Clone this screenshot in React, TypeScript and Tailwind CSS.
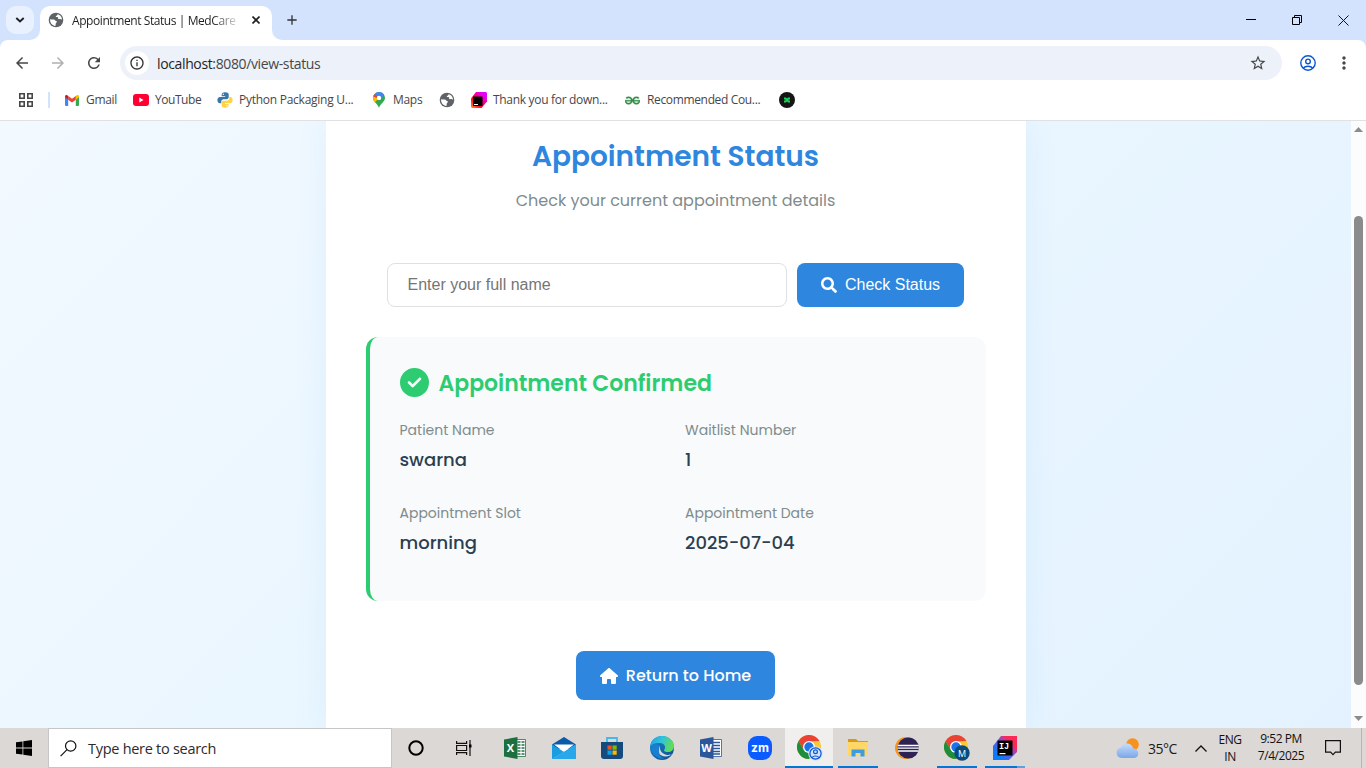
import type { ReactNode } from "react";
import {
  MdArrowBack, MdArrowForward, MdRefresh, MdStarBorder, MdMoreVert,
  MdInfoOutline, MdAdd,
} from "react-icons/md";
import { FaSearch } from "react-icons/fa";
import { FaCircleCheck, FaHouse } from "react-icons/fa6";
import { SiGeeksforgeeks } from "react-icons/si";

const SEGOE = "font-['Segoe_UI','Open_Sans',sans-serif]";
const POPPINS = "font-['Poppins','Inter',sans-serif]";

function Globe() {
  return (
    <svg viewBox="0 0 16 16" className="size-4 shrink-0">
      <circle cx="8" cy="8" r="7.3" fill="#5f6368" />
      <path d="M2 7.200c1.400 .2 2.600.2 3.900.4 1 .2 1.200 1.300 2.200 1.400.9.1 1 1 .4 1.600-.7.6-.9 1.300-.9 2.900 0 .5-.3.5-.7.4C3.800 13.200 1.900 10.800 2 7.200z" fill="#fff" />
      <path d="M9.300 2.200c.5.800-.3 1.400-1.100 1.600-.8.200-.4 1.400.6 1.300 1 0 1.300.5 1.300 1.400 0 .8 1 .9 1.700.6.8-.3 1.400.4 2.100.7.300-2.700-1.600-5.100-4.600-5.600z" fill="#fff" />
    </svg>
  );
}

function ChromeLogo() {
  return (
    <>
      <circle cx="12" cy="12" r="12" fill="#fcc934" />
      <path d="M1.600 6A12 12 0 0 1 22.400 6L12 6.500 6.800 15z" fill="#ea4335" />
      <path d="M1.600 6A12 12 0 0 0 12 24L17.200 15 12 17.500 6.800 15z" fill="#1e8e3e" />
      <circle cx="12" cy="12" r="6" fill="#fff" />
      <circle cx="12" cy="12" r="4.700" fill="#1a73e8" />
    </>
  );
}

function Bookmark({ icon, label, className }: { icon: ReactNode; label: string; className: string }) {
  return (
    <div className={`flex shrink-0 items-center ${className}`}>
      {icon}
      <span className="whitespace-nowrap text-[12px] text-[#474747]">{label}</span>
    </div>
  );
}

function BrowserChrome() {
  return (
    <header className={`shrink-0 bg-[#d3e3fd] ${SEGOE}`}>
      <div className="flex h-10 items-center">
        <div className="ml-1.5 flex size-7 items-center justify-center rounded-[10px] bg-[#e9f1fe]">
          <svg viewBox="0 0 10 6" className="h-[6px] w-[10px]" fill="none" stroke="#1f1f1f" strokeWidth="1.900"><path d="M1.300 1L5 4.500 8.700 1" /></svg>
        </div>
        <svg viewBox="0 0 10 10" className="-ml-1 size-[10px] self-end"><path d="M0 10A10 10 0 0 0 10 0V10z" fill="#fff" /></svg>
        <div className="flex h-[34px] w-[232px] items-center self-end rounded-t-[10px] bg-white pl-2 pb-1.5">
          <Globe />
          <div className="ml-2 w-[164px] overflow-hidden whitespace-nowrap pt-[2px] text-[12px] tracking-[-0.42px] text-[#1f1f1f] [mask-image:linear-gradient(to_right,black_140px,transparent_170px)]">
            Appointment Status | MedCare
          </div>
          <svg viewBox="0 0 8 8" className="ml-[16px] size-2" fill="none" stroke="#1f1f1f" strokeWidth="1.600"><path d="M.5.5l7 7M7.500.5l-7 7" /></svg>
        </div>
        <svg viewBox="0 0 10 10" className="size-[10px] self-end"><path d="M0 0A10 10 0 0 0 10 10H0z" fill="#fff" /></svg>
        <MdAdd className="ml-[2px] size-4 text-[#333]" />
        <div className="ml-auto flex items-center gap-9 pr-[17px]">
          <svg viewBox="0 0 10 10" className="size-[10px]"><path d="M0 4.500H10" stroke="#000" /></svg>
          <svg viewBox="0 0 10 10" className="size-[10px]" fill="none" stroke="#000"><path d="M.5 2.500h7v7h-7zM2.500 2.500V.5h7v7h-2" /></svg>
          <svg viewBox="0 0 11 11" className="size-[11px]" fill="none" stroke="#111"><path d="M.5.5l10 10M10.500.5l-10 10" /></svg>
        </div>
      </div>
      <div className="flex h-10 items-center rounded-t-lg bg-white pt-[6px]">
        <MdArrowBack className="ml-[13px] size-[18px] text-[#474747]" />
        <MdArrowForward className="ml-[18px] size-[18px] text-[#b0b0b0]" />
        <MdRefresh className="ml-[18px] size-[18px] text-[#474747]" />
        <div className="ml-[17px] flex h-[34px] w-[1162px] items-center rounded-full bg-[#ecf1fa] pl-[5px] pr-[15px]">
          <div className="flex size-6 items-center justify-center rounded-full bg-white">
            <MdInfoOutline className="size-4 text-[#333]" />
          </div>
          <span className="ml-2 whitespace-nowrap text-[14px] tracking-[-0.37px] text-[#1f1f1f]">
            localhost<span className="text-[#474747]">:8080/view-status</span>
          </span>
          <MdStarBorder className="ml-auto size-[18px] text-[#474747]" />
        </div>
        <svg viewBox="0 0 16 16" className="ml-[18px] size-4" fill="none" stroke="#0b57d0" strokeWidth="1.400">
          <circle cx="8" cy="8" r="7.200" /><circle cx="8" cy="6.400" r="2.300" /><path d="M3.200 13.200c2.200-2.600 7.400-2.600 9.600 0" />
        </svg>
        <MdMoreVert className="ml-[18px] size-[20px] text-[#474747]" />
      </div>
      <div className="flex h-[41px] items-center border-b border-[#dfe1e2] bg-white">
        <svg viewBox="0 0 14 14" className="ml-[19px] size-[14px]" fill="none" stroke="#474747" strokeWidth="1.600"><path d="M.8.8h4.400v4.400H.8zM8.800.8h4.400v4.400H8.800zM.8 8.800h4.400v4.400H.8zM8.800 8.800h4.400v4.400H8.800z" /></svg>
        <div className="ml-[15px] h-4 w-[2px] bg-[#d3e3fd]" />
        <Bookmark className="ml-[15px] w-[68px] gap-[7px] tracking-[-0.3px]" label="Gmail" icon={
          <svg viewBox="0 0 14 11" className="h-[11px] w-[14px] shrink-0">
            <path d="M0 1.500V10a1 1 0 0 0 1 1h2.200V4.500z" fill="#4285f4" /><path d="M10.800 4.500V11H13a1 1 0 0 0 1-1V1.500z" fill="#34a853" />
            <path d="M10.800 1v3.700L14 2.300V1.400C14 0 12.500-.4 11.500.4z" fill="#fbbc04" /><path d="M3.200 4.700V1L7 3.800 10.800 1v3.700L7 7.500z" fill="#ea4335" /><path d="M0 1.400v.9l3.200 2.400V1L2.500.4C1.500-.4 0 0 0 1.400z" fill="#c5221f" />
          </svg>} />
        <Bookmark className="w-[84px] gap-[6px] tracking-[-0.45px]" label="YouTube" icon={
          <svg viewBox="0 0 16 12" className="h-[12px] w-[16px] shrink-0"><rect width="16" height="12" rx="3" fill="#ff0033" /><path d="M6.300 3.500v5L10.500 6z" fill="#fff" /></svg>} />
        <Bookmark className="w-[156px] gap-[6px] tracking-[-0.26px]" label="Python Packaging U..." icon={
          <svg viewBox="0 0 16 16" className="size-4 shrink-0">
            <path d="M8 .3C5.300.3 4.700 1.400 4.700 2.500v1.700h3.500v.7H3C1.300 4.900.4 6.200.4 8.100c0 2 .9 3.200 2.500 3.200h1.400V9.400c0-1.200 1-2.200 2.300-2.200h3.200c1 0 1.900-.8 1.900-1.900V2.500C11.700 1.200 10.500.3 8 .3z" fill="#3776ab" />
            <path d="M8.200 15.800c2.600 0 3.300-1 3.300-2.200v-1.700H8v-.6h5.100c1.700 0 2.500-1.400 2.500-3.300s-.9-3.100-2.400-3.100h-1v1.700c0 1.300-1.100 2.200-2.300 2.200H6.600c-1.100 0-1.900.9-1.900 1.900v2.900c0 1.300 1.100 2.200 3.500 2.200z" fill="#ffd343" />
            <circle cx="6.300" cy="2.300" r=".7" fill="#fff" /><circle cx="9.900" cy="13.800" r=".7" fill="#fff" />
          </svg>} />
        <Bookmark className="w-[66px] gap-[8px] tracking-[-0.3px]" label="Maps" icon={
          <svg viewBox="0 0 12 16" className="h-4 w-[12px] shrink-0">
            <path d="M6 0a6 6 0 0 0-6 6c0 4 4.500 5 6 10 1.500-5 6-6 6-10a6 6 0 0 0-6-6z" fill="#34a853" />
            <path d="M.3 4.200A6 6 0 0 1 1.600 2L6 6 1.700 10.400C.4 8.900-.4 6.500.3 4.200z" fill="#fbbc04" /><path d="M1.400 2.200A6 6 0 0 0 .2 4.600L3.700 6 6 3.500z" fill="#ea4335" /><path d="M1.400 2.200A6 6 0 0 1 11.200 3L7 7z" fill="#4285f4" /><circle cx="6" cy="5.900" r="2.200" fill="#fff" />
          </svg>} />
        <div className="w-[32px]"><Globe /></div>
        <Bookmark className="w-[154px] gap-[6px] tracking-[-0.31px]" label="Thank you for down..." icon={
          <svg viewBox="0 0 16 16" className="size-4 shrink-0">
            <defs><linearGradient id="jb" x1="0" y1="1" x2="1" y2="0"><stop offset="0" stopColor="#ff9419" /><stop offset=".35" stopColor="#ff021d" /><stop offset=".8" stopColor="#e600ff" /></linearGradient></defs>
            <path d="M0 6.500L5 0H15l1 1v8.500L10.500 16H1L0 15z" fill="url(#jb)" /><path d="M2 4.500h9.500V14H2z" fill="#000" /><path d="M3 12h4v1H3z" fill="#fff" />
          </svg>} />
        <Bookmark className="w-[154px] gap-[7px] tracking-[-0.35px]" label="Recommended Cou..." icon={<SiGeeksforgeeks className="size-[15px] shrink-0 stroke-[#2f8d46] stroke-[0.600px] text-[#2f8d46]" />} />
        <svg viewBox="0 0 16 16" className="size-4">
          <circle cx="8" cy="8" r="8" fill="#151515" />
          <path d="M5 5.500h2l1 1 1-1h2v2H9.500v1H11v2H9l-1-1-1 1H5v-2h1.500v-1H5z" fill="#19d35b" />
        </svg>
      </div>
    </header>
  );
}

function Detail({ label, value }: { label: string; value: string }) {
  return (
    <div className="flex h-[59px] flex-col whitespace-nowrap">
      <span className="text-[14px] leading-[24px] text-[#7f8c8d]">{label}</span>
      <span className="mt-[3px] text-[18px] font-medium leading-[30px] text-[#2c3e50]">{value}</span>
    </div>
  );
}

function Page() {
  return (
    <main className="flex min-h-0 flex-1 overflow-hidden">
      <div className={`flex flex-1 justify-center overflow-hidden bg-[linear-gradient(135deg,#f2f9ff_0%,#e9f6ff_50%,#e4f2ff_100%)] ${POPPINS}`}>
        <section className="flex w-[700px] flex-col items-center bg-white px-10 shadow-[0_0_30px_rgba(46,134,222,0.08)]">
          <h1 className="mt-[14px] text-[28px] font-semibold leading-[44px] text-[#2e86de]">Appointment Status</h1>
          <p className="mt-[9px] text-[16px] leading-[26px] text-[#7f8c8d]">Check your current appointment details</p>
          <div className="mt-[49px] flex w-full gap-[10px] pl-[21px] font-['Liberation_Sans',sans-serif]">
            <input placeholder="Enter your full name" className="h-11 w-[400px] rounded-lg border border-[#e0e0e0] px-5 text-[16px] text-[#2c3e50] outline-none placeholder:text-[#757575]" />
            <button className="flex h-11 w-[167px] items-center justify-center gap-2 rounded-lg bg-[#2e86de] pl-[1px] text-[16px] text-white">
              <FaSearch className="size-4" /><span>Check Status</span>
            </button>
          </div>
          <div className="mt-[30px] h-[264px] w-full rounded-xl border-l-4 border-[#2ecc71] bg-[#f8fafc] px-[30px] pt-[27px]">
            <h2 className="flex h-9 items-center gap-[10px] text-[22px] font-semibold leading-9 text-[#2ecc71]">
              <FaCircleCheck className="size-[29px]" /><span className="pt-[3px]">Appointment Confirmed</span>
            </h2>
            <div className="mt-[18px] grid grid-cols-2 gap-x-[15px] gap-y-[24px]">
              <Detail label="Patient Name" value="swarna" />
              <Detail label="Waitlist Number" value="1" />
              <Detail label="Appointment Slot" value="morning" />
              <Detail label="Appointment Date" value="2025-07-04" />
            </div>
          </div>
          <button className="mt-[50px] flex h-[49px] w-[199px] shrink-0 items-center justify-center gap-2 rounded-lg bg-[#2e86de] text-[16px] font-medium text-white">
            <FaHouse className="size-[18px]" /><span>Return to Home</span>
          </button>
        </section>
      </div>
      <div className="flex w-[15px] flex-col items-center bg-[#fcfcfc]">
        <svg viewBox="0 0 9 5" className="mt-[6px] h-[5px] w-[9px]"><path d="M0 5L4.500 0 9 5z" fill="#8b8b8b" /></svg>
        <div className="mt-[84px] h-[469px] w-[9px] rounded-full bg-[#8b8b8b]" />
        <svg viewBox="0 0 9 5" className="mt-[31px] h-[5px] w-[9px]"><path d="M0 0L4.500 5 9 0z" fill="#8b8b8b" /></svg>
      </div>
    </main>
  );
}

function TaskButton({ children, active, bar, className = "" }: { children: ReactNode; active?: boolean; bar?: ReactNode; className?: string }) {
  return (
    <div className="flex w-[49.100px] justify-center">
      <div className={`relative flex h-10 w-12 items-center justify-center ${active ? "bg-[#f1efed]" : ""} ${className}`}>
        {children}
        {bar}
      </div>
    </div>
  );
}

function Office({ color, dark, letter, kind }: { color: string; dark: string; letter: string; kind: "grid" | "lines" }) {
  return (
    <svg viewBox="0 0 24 24" className="size-6">
      <path d="M13 3.500h9.500v17H13z" fill="#fff" stroke={color} strokeWidth=".8" />
      {kind === "grid"
        ? <path d="M14.500 6h3M18.500 6h3M14.500 9h3M18.500 9h3M14.500 12h3M18.500 12h3M14.500 15h3M18.500 15h3M14.500 18h3M18.500 18h3" stroke={color} strokeWidth="1.600" />
        : <path d="M14 6.500h7M14 9.500h7M14 12.500h7M14 15.500h7M14 18h7" stroke={color} strokeWidth="1.300" />}
      <path d="M1 3.500L14.500 1v22L1 20.500z" fill={dark} />
      <text x="7.500" y="16.300" textAnchor="middle" fontSize="11" fontWeight="700" fill="#fff" fontFamily="Open Sans, sans-serif">{letter}</text>
    </svg>
  );
}

function Taskbar() {
  const bar = <div className="absolute bottom-0 h-[2px] w-10 bg-[#0078d7]" />;
  return (
    <footer className={`flex h-10 shrink-0 items-center bg-[#dcd8d5] ${SEGOE}`}>
      <svg viewBox="0 0 16 16" className="mx-4 size-4 shrink-0" fill="#000"><path d="M0 2.300L6.500 1.400v6.200H0zM7.300 1.300L16 0v7.600H7.300zM0 8.400h6.500v6.200L0 13.700zM7.300 8.400H16V16l-8.700-1.300z" /></svg>
      <div className="flex h-10 w-[344px] shrink-0 items-center border border-[#c6c6c6] bg-white pl-[11px]">
        <svg viewBox="0 0 17 17" className="size-[17px]" fill="none" stroke="#111" strokeWidth="1.200"><circle cx="10.700" cy="6" r="5.200" /><path d="M7 9.700L.6 16.200" /></svg>
        <span className="ml-[11px] pt-[2px] text-[14.500px] tracking-[-0.28px] text-[#2b2b2b]">Type here to search</span>
      </div>
      <div className="flex">
        <TaskButton className="pr-[2px]"><svg viewBox="0 0 16 16" className="size-4"><circle cx="8" cy="8" r="6.700" fill="none" stroke="#000" strokeWidth="2" /></svg></TaskButton>
        <TaskButton className="pr-[3px]"><svg viewBox="0 0 16 16" className="size-4" fill="none" stroke="#111" strokeWidth="1.200"><path d="M.6 1v2.400h10V1M.6 15v-2.400h10V15M.6 5.500h10v5H.6zM14 0v16" /><path d="M13 4.500h2.500v3H13z" fill="#000" stroke="none" /></svg></TaskButton>
        <TaskButton><Office color="#217346" dark="#1d6f42" letter="X" kind="grid" /></TaskButton>
        <TaskButton><svg viewBox="0 0 24 24" className="size-6"><path d="M0 8.500L12 1l12 7.500L20 13H4z" fill="#0a5ba8" /><path d="M2 8.500h20L12 16z" fill="#fff" /><path d="M0 8.500l12 7.500L0 23z" fill="#1b9de2" /><path d="M24 8.500V23H0z" fill="#35b8f1" /><path d="M24 8.500L12 16 0 23h24z" fill="#28a8ea" /></svg></TaskButton>
        <TaskButton className="pr-[1px]"><svg viewBox="0 0 24 24" className="size-6"><path d="M7 7V2h10v5" fill="none" stroke="#45b8ee" strokeWidth="1.800" /><path d="M1 6h22v14a3 3 0 0 1-3 3H4a3 3 0 0 1-3-3z" fill="#174a7c" /><path d="M7.500 9.500h4.200v4.200H7.500z" fill="#f25022" /><path d="M12.500 9.500h4.200v4.200h-4.200z" fill="#7fba00" /><path d="M7.500 14.500h4.200v4.200H7.500z" fill="#00a4ef" /><path d="M12.500 14.500h4.200v4.200h-4.200z" fill="#ffb900" /></svg></TaskButton>
        <TaskButton><svg viewBox="0 0 24 24" className="size-6">
          <defs><linearGradient id="e1" x1="0" y1="0" x2="1" y2=".3"><stop offset="0" stopColor="#1e9fe0" /><stop offset=".5" stopColor="#2fc2df" /><stop offset="1" stopColor="#5fdc5a" /></linearGradient><linearGradient id="e2" x1="0" y1="0" x2="1" y2="1"><stop offset="0" stopColor="#1a8ad6" /><stop offset="1" stopColor="#114a8b" /></linearGradient></defs>
          <circle cx="12" cy="12" r="12" fill="url(#e2)" /><path d="M0 11C.5 4.500 5.500 0 12 0c7 0 12 5 12 10 0 4-3 6-6 6-2.600 0-4-.8-4-1.800s1-1 1-3C15 8.500 12.500 7 9 7 4.500 7 1 8.500 0 11z" fill="url(#e1)" />
          <path d="M10 10c-2 1.500-2.500 4-1.500 6.500C10 20 15 21.500 20 19.500c1-.4 1.800-.9 2.400-1.500-1 .5-3 1-4.800.9-4.600-.2-8.500-4-7.600-8.900z" fill="#dcd8d5" /><path d="M9.500 11C9 7.800 5 7.500 2 9.500c-1.500 3 0 8 3.500 10.500 2.500 2 5.500 3 8.500 2.500-4-1.500-6-6-4.500-11.500z" fill="#1b7fd0" />
        </svg></TaskButton>
        <TaskButton><Office color="#2b579a" dark="#2b579a" letter="W" kind="lines" /></TaskButton>
        <TaskButton><svg viewBox="0 0 24 24" className="size-6"><rect width="24" height="24" rx="9" fill="#0b5cff" /><text x="12" y="15.500" textAnchor="middle" fontSize="12" fontWeight="700" fill="#fff" fontFamily="Inter, sans-serif">zm</text></svg></TaskButton>
        <TaskButton active bar={<div className="absolute bottom-0 left-0 h-[2px] w-12 bg-[#0078d7]" />} className="pl-[2px]"><svg viewBox="0 0 26 26" className="size-[26px]"><ChromeLogo /><circle cx="18.500" cy="18.500" r="7.300" fill="#d3e3fd" /><circle cx="18.500" cy="18.500" r="5.600" fill="none" stroke="#0b57d0" strokeWidth="1.200" /><circle cx="18.500" cy="16.800" r="1.900" fill="none" stroke="#0b57d0" strokeWidth="1.200" /><path d="M15 22.500c1.500-2 5.500-2 7 0" fill="none" stroke="#0b57d0" strokeWidth="1.200" /></svg></TaskButton>
        <TaskButton bar={bar}><svg viewBox="0 0 22 20" className="h-5 w-[22px]"><path d="M1 1h8l2 2h10v6H1z" fill="#d99a10" /><path d="M1 4h20v14H1z" fill="#ffd767" /><path d="M4.500 18.500v-7h13v7h-4V15h-5v3.500z" fill="#3d9be0" /></svg></TaskButton>
        <TaskButton><svg viewBox="0 0 24 24" className="size-6"><circle cx="11" cy="12" r="11" fill="#f7941e" /><circle cx="13.300" cy="12" r="10.600" fill="#2c2255" /><path d="M2.900 9.500h20.800M2.700 12.200h21.200M3 15h20.600" stroke="#fff" strokeWidth="1.300" /></svg></TaskButton>
        <TaskButton bar={bar}><svg viewBox="0 0 26 26" className="size-[26px]"><ChromeLogo /><circle cx="18" cy="18" r="7.700" fill="#0a4a7c" /><text x="18" y="21.500" textAnchor="middle" fontSize="9" fill="#fff" fontFamily="Open Sans, sans-serif">M</text></svg></TaskButton>
        <TaskButton className="pr-[2px]" bar={<div className="absolute bottom-0 left-[3px] flex h-[2px] w-10 bg-[#0078d7]"><div className="ml-auto w-2 bg-[#5ba3e0]" /></div>}><svg viewBox="0 0 24 24" className="size-6"><defs><linearGradient id="ij" x1="0" y1="1" x2="1" y2="0"><stop offset=".2" stopColor="#087cfa" /><stop offset=".55" stopColor="#7b4fe0" /><stop offset=".75" stopColor="#fe2857" /></linearGradient></defs><path d="M0 10L8 0h16v16l-8 8H0z" fill="url(#ij)" /><path d="M4.500 4.500h15v15h-15z" fill="#000" /><path d="M6.500 17h6v1.200h-6z" fill="#fff" /><text x="6" y="13" fontSize="8.500" fontWeight="700" fill="#fff" fontFamily="Liberation Mono, monospace">IJ</text></svg></TaskButton>
      </div>
      <svg viewBox="0 0 24 20" className="ml-auto h-5 w-6"><defs><linearGradient id="cl" x1="0" y1="0" x2="0" y2="1"><stop offset="0" stopColor="#c7dcf8" /><stop offset="1" stopColor="#78a7ea" /></linearGradient></defs><circle cx="16.500" cy="6.500" r="6.300" fill="#f7921e" /><path d="M5.500 20a5.300 5.300 0 0 1-.5-10.500 6.500 6.500 0 0 1 12.300 1A4.900 4.900 0 0 1 19 20z" fill="url(#cl)" /></svg>
      <span className="ml-2 text-[14px] tracking-[-0.45px] text-[#1a1a1a]">35°C</span>
      <svg viewBox="0 0 12 7" className="ml-[18px] h-[7px] w-3" fill="none" stroke="#111" strokeWidth="1.300"><path d="M.5 6.500L6 1l5.500 5.500" /></svg>
      <div className="ml-[8px] flex w-[30px] flex-col items-center text-[12px] leading-[17px] tracking-[-0.4px] text-[#111]"><span>ENG</span><span>IN</span></div>
      <div className="ml-[8px] flex w-[56px] flex-col items-center whitespace-nowrap pb-[2px] text-[12px] leading-[17px] tracking-[-0.45px] text-[#111]"><span>9:52 PM</span><span>7/4/2025</span></div>
      <svg viewBox="0 0 16 16" className="ml-4 size-4" fill="none" stroke="#111" strokeWidth="1.200"><path d="M.6.6h14.800v11.500h-5L8 14.600l-2.400-2.500h-5z" /></svg>
      <div className="ml-5 mr-1 h-10 w-px bg-[#b9b5b2]" />
    </footer>
  );
}

export default function App() {
  return (
    <div className="flex h-[768px] w-[1366px] flex-col overflow-hidden">
      <BrowserChrome />
      <Page />
      <Taskbar />
    </div>
  );
}
